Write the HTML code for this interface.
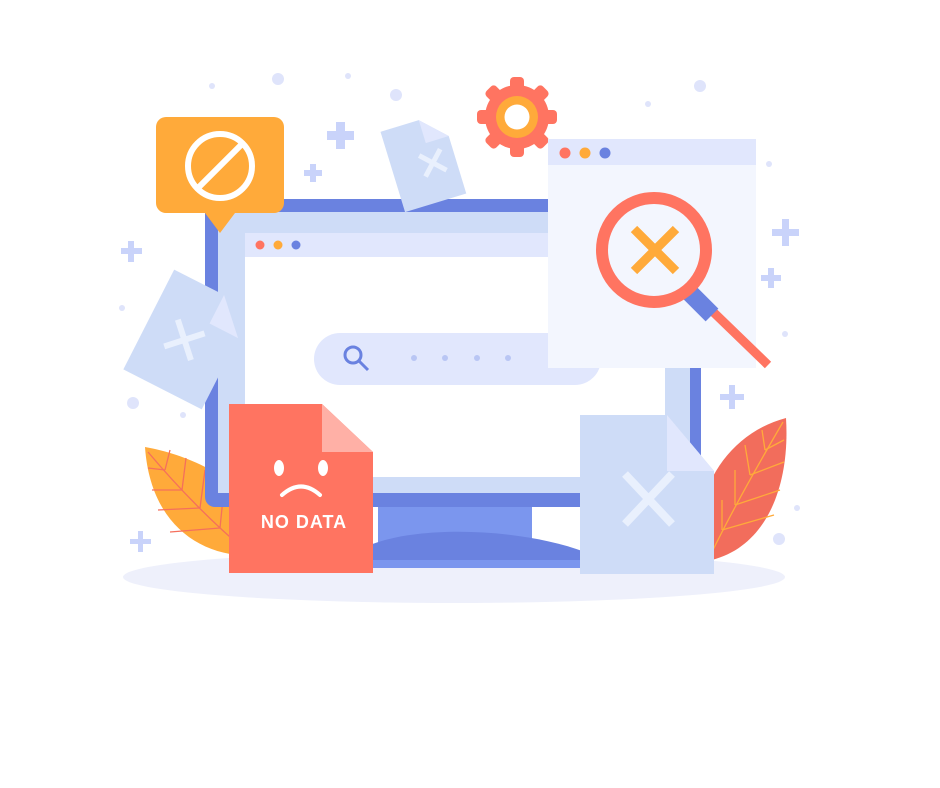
<!DOCTYPE html>
<html><head><style>html,body{margin:0;padding:0;background:#fff;width:940px;height:788px;overflow:hidden}</style></head>
<body>
<svg width="940" height="788" viewBox="0 0 940 788" xmlns="http://www.w3.org/2000/svg">
<ellipse cx="454" cy="577" rx="331" ry="26" fill="#eef0fb"/>
<g fill="#dfe4fb">
<circle cx="278" cy="79" r="6"/><circle cx="212" cy="86" r="3"/><circle cx="348" cy="76" r="3"/><circle cx="396" cy="95" r="6"/>
<circle cx="700" cy="86" r="6"/><circle cx="648" cy="104" r="3"/><circle cx="769" cy="164" r="3"/><circle cx="785" cy="334" r="3"/>
<circle cx="122" cy="308" r="3"/><circle cx="133" cy="403" r="6"/><circle cx="183" cy="415" r="3"/><circle cx="779" cy="539" r="6"/><circle cx="797" cy="508" r="3"/>
</g>
<g fill="#c9d3fa">
<path d="M336 122h9v9h9v9h-9v9h-9v-9h-9v-9h9z"/>
<path d="M310 164h6v6h6v6h-6v6h-6v-6h-6v-6h6z"/>
<path d="M128 241h6v7h8v6h-8v8h-6v-8h-7v-6h7z"/>
<path d="M782 219h7v10h10v7h-10v10h-7v-10h-10v-7h10z"/>
<path d="M768 268h6v7h7v6h-7v7h-6v-7h-7v-6h7z"/>
<path d="M729 385h6v9h9v6h-9v9h-6v-9h-9v-6h9z"/>
<path d="M138 531h5v8h8v5h-8v8h-5v-8h-8v-5h8z"/>
</g>
<!-- left leaf -->
<path d="M145 447 C190 455 245 480 258 520 L250 556 C195 555 150 520 145 447Z" fill="#ffaa3a"/>
<g stroke="#f56f5c" stroke-width="1.3" fill="none"><path d="M148 452 C180 490 215 525 245 550"/>
<path d="M165 470 L170 450 M182 490 L186 458 M200 508 L205 470 M220 528 L224 488"/>
<path d="M165 470 L148 468 M182 490 L152 490 M200 508 L158 510 M220 528 L170 532"/></g>
<!-- right leaf -->
<path d="M786 418 C740 430 705 470 700 520 L712 560 C770 545 790 480 786 418Z" fill="#f26d5c"/>
<g stroke="#ffaa3a" stroke-width="1.3" fill="none"><path d="M783 422 C755 470 730 515 712 552"/>
<path d="M765 450 L762 430 M750 475 L745 445 M735 505 L735 470 M722 530 L722 500"/>
<path d="M765 450 L784 440 M750 475 L784 462 M735 505 L780 490 M722 530 L774 515"/></g>
<!-- monitor -->
<rect x="205" y="199" width="496" height="308" rx="10" fill="#6a82e0"/>
<rect x="218" y="212" width="472" height="281" fill="#cedcf7"/>
<rect x="245" y="233" width="420" height="244" fill="#fff"/>
<rect x="245" y="233" width="420" height="24" fill="#e1e7fd"/>
<circle cx="260" cy="245" r="4.5" fill="#ff7461"/><circle cx="278" cy="245" r="4.5" fill="#ffaa3a"/><circle cx="296" cy="245" r="4.5" fill="#6a82e0"/>
<rect x="314" y="333" width="287" height="52" rx="26" fill="#e1e7fd"/>
<circle cx="353" cy="355" r="8" fill="none" stroke="#6a82e0" stroke-width="3"/>
<path d="M359 361l9 9" stroke="#6a82e0" stroke-width="3"/>
<g fill="#b9c6f4"><circle cx="414" cy="358" r="3"/><circle cx="445" cy="358" r="3"/><circle cx="477" cy="358" r="3"/><circle cx="508" cy="358" r="3"/></g>
<rect x="378" y="507" width="154" height="60" fill="#7b96ee"/>
<path d="M370 545 C420 525 520 528 585 552 L585 567 L370 567Z" fill="#6a82e0"/>
<rect x="370" y="560" width="215" height="8" fill="#7b96ee"/>
<!-- top tilted doc -->
<g transform="rotate(-17 432 160)">
<path d="M391 118 h40 l24 24 v60 h-64z" fill="#cedcf7"/>
<path d="M431 118 v24 h24z" fill="#e1e7fd"/>
<path d="M421 152 l22 22 M443 152 l-22 22" stroke="#e9f0fd" stroke-width="5"/>
</g>
<!-- left tilted doc -->
<g transform="rotate(27 188 335)">
<path d="M146 283 h56 l32 32 v80 h-88z" fill="#cedcf7"/>
<path d="M202 283 v32 h32z" fill="#e1e7fd"/>
<path d="M172 326 l30 30 M202 326 l-30 30" stroke="#e9f0fd" stroke-width="6"/>
</g>
<!-- speech bubble -->
<path d="M166 117 h108 a10 10 0 0 1 10 10 v76 a10 10 0 0 1 -10 10 h-39 l-15 20 l-15 -20 h-39 a10 10 0 0 1 -10 -10 v-76 a10 10 0 0 1 10 -10z" fill="#ffaa3a"/>
<circle cx="220" cy="166" r="32" fill="none" stroke="#fff" stroke-width="6"/>
<path d="M198 188 L242 144" stroke="#fff" stroke-width="6"/>
<!-- gear -->
<g fill="#ff7461" transform="translate(517 117)">
<circle r="32"/>
<g id="t"><rect x="-7" y="-40" width="14" height="14" rx="4"/></g>
<use href="#t" transform="rotate(45)"/><use href="#t" transform="rotate(90)"/><use href="#t" transform="rotate(135)"/><use href="#t" transform="rotate(180)"/><use href="#t" transform="rotate(225)"/><use href="#t" transform="rotate(270)"/><use href="#t" transform="rotate(315)"/>
<circle r="21" fill="#ffaa3a"/><circle r="12.5" fill="#fff"/>
</g>
<!-- right window -->
<rect x="548" y="139" width="208" height="229" fill="#f3f6fe"/>
<rect x="548" y="139" width="208" height="26" fill="#e1e7fd"/>
<circle cx="565" cy="153" r="5.5" fill="#ff7461"/><circle cx="585" cy="153" r="5.5" fill="#ffaa3a"/><circle cx="605" cy="153" r="5.5" fill="#6a82e0"/>
<path d="M706 305 L768 365" stroke="#ff7461" stroke-width="9"/>
<path d="M690 293 L712 315" stroke="#6a82e0" stroke-width="18"/>
<circle cx="654" cy="250" r="52" fill="#f3f6fe" stroke="#ff7461" stroke-width="12"/>
<path d="M634 229 l42 42 M676 229 l-42 42" stroke="#ffaa3a" stroke-width="9"/>
<!-- no data doc -->
<path d="M229 404 h93 l51 48 v121 h-144z" fill="#ff7461"/>
<path d="M322 404 v48 h51z" fill="#ffb0a6"/>
<ellipse cx="279" cy="468" rx="5" ry="8" fill="#fff"/><ellipse cx="323" cy="468" rx="5" ry="8" fill="#fff"/>
<path d="M282 495 Q301 478 320 495" stroke="#fff" stroke-width="4" fill="none" stroke-linecap="round"/>
<text x="304" y="528" text-anchor="middle" font-family="Liberation Sans, sans-serif" font-weight="bold" font-size="18" letter-spacing="1" fill="#fff">NO DATA</text>
<!-- right doc -->
<path d="M580 415 h87 l47 56 v103 h-134z" fill="#cedcf7"/>
<path d="M667 415 v56 h47z" fill="#e1e7fd"/>
<path d="M625 474 l47 50 M672 474 l-47 50" stroke="#e9f0fd" stroke-width="8"/>
</svg>
</body></html>
